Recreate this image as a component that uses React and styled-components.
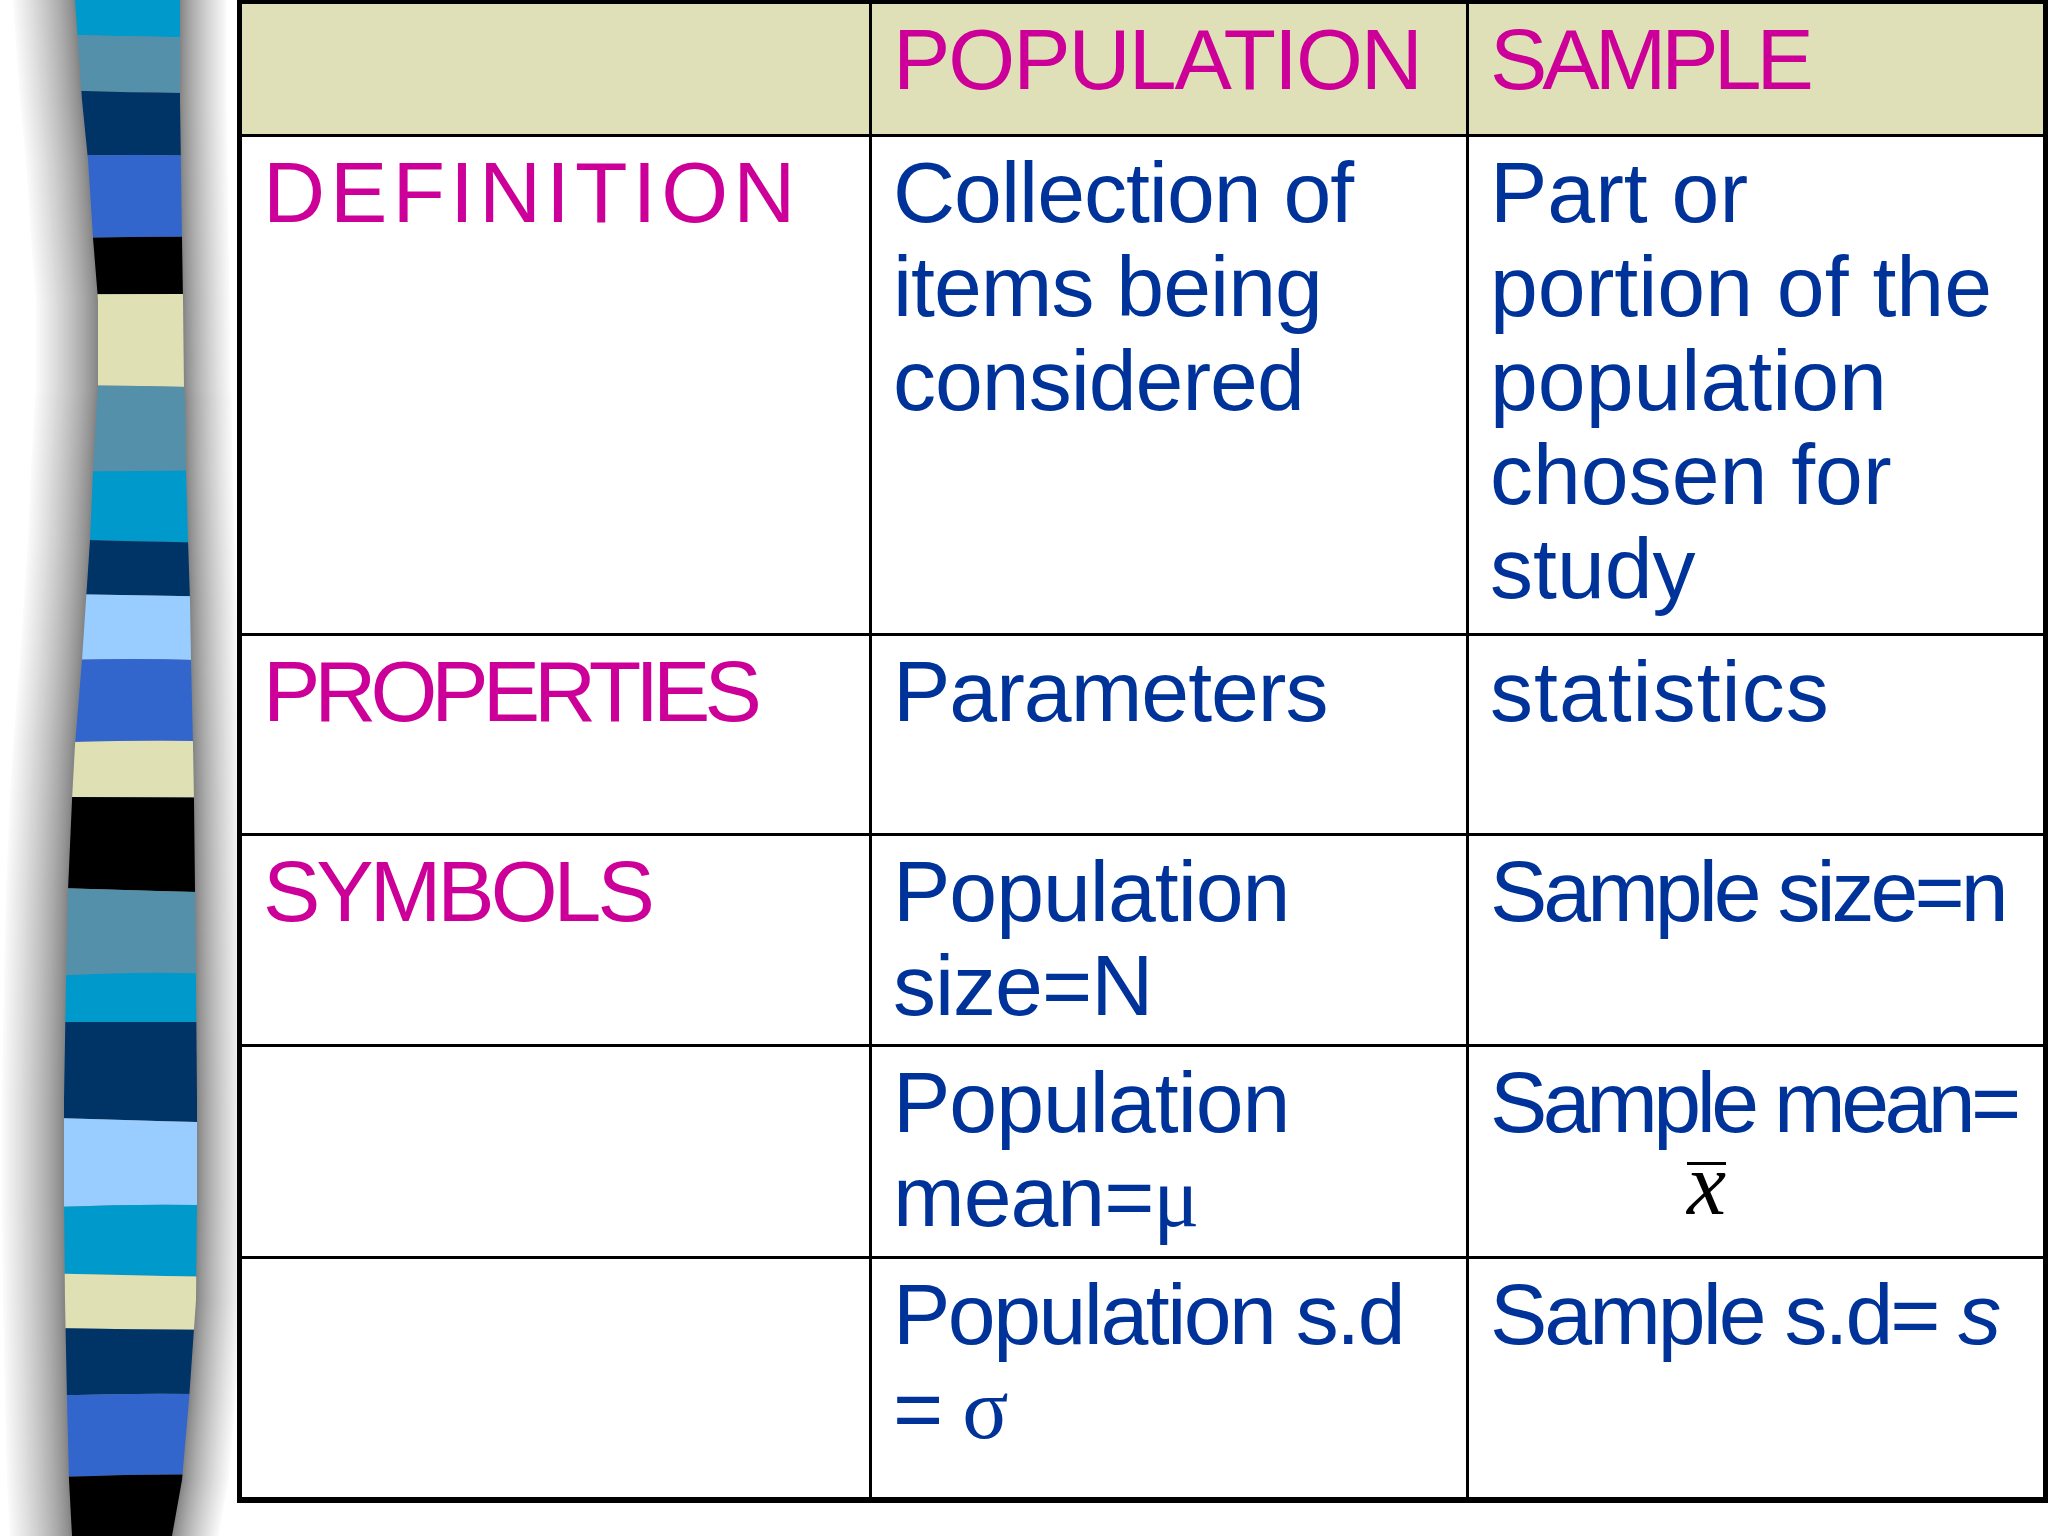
import React from "react";
import styled, { createGlobalStyle } from "styled-components";

const GlobalStyle = createGlobalStyle`
  html, body {
    margin: 0;
    padding: 0;
    background: #fff;
  }
  body {
    font-family: "Liberation Sans", Arial, sans-serif;
  }
`;

const Slide = styled.div`
  display: flex;
  width: 2048px;
  height: 1536px;
  overflow: hidden;
  background: #fff;
`;

const Ribbon = styled.svg`
  flex: none;
  display: block;
  width: 237px;
  height: 1536px;
`;

const Grid = styled.div`
  flex: 1;
  align-self: flex-start;
  display: grid;
  grid-template-columns: 627px 594px 1fr;
  grid-template-rows: 130px 496px 197px 208px 209px 238px;
  gap: 3px;
  background: #000;
  border: 5px solid #000;
  border-top-width: 4px;
  border-bottom-width: 6px;
`;

const Cell = styled.div`
  background: ${(p) => (p.$head ? "#e0e0b8" : "#fff")};
  padding: 8px 0 0 21px;
  font-size: 86px;
  line-height: 94px;
  color: ${(p) => (p.$label ? "#cc0099" : "#003399")};
  letter-spacing: ${(p) => p.$spacing || "-1px"};
  white-space: nowrap;
  overflow: hidden;
`;

const Line = styled.div``;

const Greek = styled.span`
  font-family: "Liberation Serif", "Times New Roman", serif;
  font-style: normal;
  letter-spacing: 0;
`;

const Slanted = styled.span`
  font-style: italic;
`;

const BarRow = styled.div`
  display: flex;
  padding-left: 197px;
  margin-top: 13px;
`;

const XBar = styled.span`
  border-top: 3px solid #000;
  color: #000;
  font-family: "Liberation Serif", "Times New Roman", serif;
  font-style: italic;
  font-size: 88px;
  line-height: 40px;
  letter-spacing: 0;
`;

// left decorative ribbon
const edgeLeft = [
  [75, 0], [82, 100], [88, 160], [93, 238], [98, 300], [98, 390], [97, 400],
  [93, 470], [90, 540], [86, 600], [82, 660], [75, 745], [72, 800], [68, 890],
  [66, 980], [64, 1100], [64, 1200], [65, 1300], [67, 1400], [69, 1480], [72, 1536],
];
const edgeRight = [
  [180, 0], [180, 100], [182, 238], [183, 300], [184, 390], [185, 400],
  [186, 470], [188, 540], [190, 600], [191, 660], [193, 745], [194, 800],
  [195, 890], [196, 980], [197, 1100], [197, 1200], [196, 1300], [189, 1400],
  [182, 1480], [172, 1536],
];

const stripeColors = {
  cyan: "#0099cc",
  steel: "#5590ab",
  navy: "#003366",
  royal: "#3366cc",
  black: "#000000",
  beige: "#e0e0b5",
  light: "#99ccff",
};

// [left y, mid y, right y] for each boundary
const bounds = [
  [0, 0, 0], [33, 36, 38], [88, 92, 93], [158, 155, 157], [240, 237, 237],
  [295, 294, 294], [385, 386, 388], [472, 471, 470], [537, 541, 543],
  [593, 595, 597], [663, 659, 662], [745, 741, 742], [797, 797, 798],
  [886, 890, 893], [980, 973, 975], [1022, 1022, 1022], [1116, 1120, 1123],
  [1210, 1205, 1206], [1272, 1275, 1277], [1327, 1329, 1330],
  [1398, 1394, 1395], [1480, 1475, 1475], [1536, 1536, 1536],
];
const order = [
  "cyan", "steel", "navy", "royal", "black", "beige", "steel", "cyan", "navy",
  "light", "royal", "beige", "black", "steel", "cyan", "navy", "light", "cyan",
  "beige", "navy", "royal", "black",
];

const pathFor = (d) =>
  "M" +
  edgeLeft.map(([x, y]) => `${x - d},${y}`).join(" L") +
  " L" +
  [...edgeRight].reverse().map(([x, y]) => `${x + d * 0.75},${y}`).join(" L") +
  " Z";

const outline = pathFor(0);

// smooth shadow: many nested outlines, darker towards the band
const SHADOW_STEPS = 48;
const shadowSteps = Array.from({ length: SHADOW_STEPS }, (_, k) => {
  const t = 1 - k / SHADOW_STEPS;
  const d = 62 * t;
  const v = Math.round(126 + (250 - 126) * Math.pow(t, 0.75));
  return [d, `rgb(${v},${v},${v})`];
});

function RibbonArt() {
  return (
    <Ribbon viewBox="0 0 237 1536">
      <defs>
        <clipPath id="band">
          <path d={outline} />
        </clipPath>
      </defs>
      {shadowSteps.map(([d, c]) => (
        <path key={d} d={pathFor(d)} fill={c} />
      ))}
      <g clipPath="url(#band)">
        {order.map((c, i) => {
          const a = bounds[i];
          const b = bounds[i + 1];
          const d = `M0,${a[0]} Q130,${2 * a[1] - (a[0] + a[2]) / 2} 237,${a[2]} L237,${b[2]} Q130,${2 * b[1] - (b[0] + b[2]) / 2} 0,${b[0]} Z`;
          return <path key={i} d={d} fill={stripeColors[c]} />;
        })}
      </g>
    </Ribbon>
  );
}

const rows = [
  {
    label: "DEFINITION",
    labelSpacing: "5px",
    pop: [["Collection of"], ["items being"], ["considered"]],
    sample: [["Part or"], ["portion of the"], ["population"], ["chosen for"], ["study"]],
    sampleSpacing: "0px",
  },
  {
    label: "PROPERTIES",
    labelSpacing: "-6px",
    pop: [["Parameters"]],
    sample: [["statistics"]],
    sampleSpacing: "1px",
  },
  {
    label: "SYMBOLS",
    labelSpacing: "-4px",
    pop: [["Population"], ["size=N"]],
    sample: [["Sample size=n"]],
    sampleSpacing: "-4px",
  },
  {
    label: "",
    pop: [["Population"], ["mean=", <Greek key="mu">μ</Greek>]],
    sample: [["Sample mean="]],
    sampleSpacing: "-4.5px",
    bar: true,
  },
  {
    label: "",
    pop: [["Population s.d"], ["= ", <Greek key="sigma">σ</Greek>]],
    popSpacing: "-2.5px",
    sample: [["Sample s.d= ", <Slanted key="s">s</Slanted>]],
    sampleSpacing: "-3px",
  },
];

function Lines({ items }) {
  return items.map((parts, i) => <Line key={i}>{parts}</Line>);
}

export default function App() {
  return (
    <>
      <GlobalStyle />
      <Slide>
        <RibbonArt />
        <Grid>
          <Cell $head />
          <Cell $head $label $spacing="-2px">POPULATION</Cell>
          <Cell $head $label $spacing="-5px">SAMPLE</Cell>
          {rows.map((r, i) => (
            <React.Fragment key={i}>
              <Cell $label $spacing={r.labelSpacing}>{r.label}</Cell>
              <Cell $spacing={r.popSpacing}>
                <Lines items={r.pop} />
              </Cell>
              <Cell $spacing={r.sampleSpacing}>
                <Lines items={r.sample} />
                {r.bar && (
                  <BarRow>
                    <XBar>x</XBar>
                  </BarRow>
                )}
              </Cell>
            </React.Fragment>
          ))}
        </Grid>
      </Slide>
    </>
  );
}
